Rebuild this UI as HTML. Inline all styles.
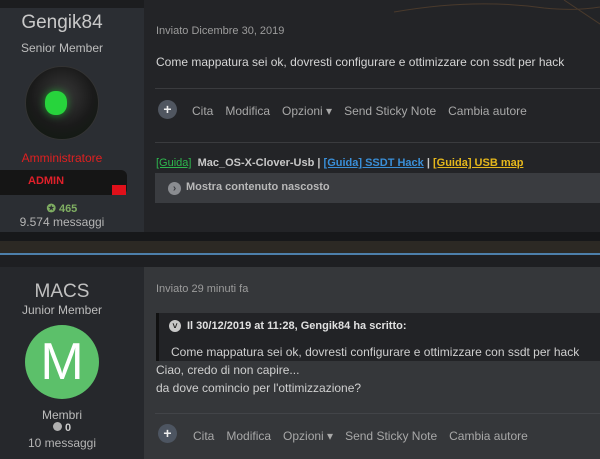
<!DOCTYPE html>
<html><head><meta charset="utf-8"><style>
*{margin:0;padding:0;box-sizing:border-box}
body{width:600px;height:459px;overflow:hidden;background:#1e1f22;font-family:"Liberation Sans",sans-serif;position:relative}
.a{position:absolute}
.t{position:absolute;white-space:nowrap}
.act span{margin-left:12px}
</style></head><body>
<!-- post 1 -->
<div class="a" style="left:0;top:0;width:600px;height:8px;background:#1c1d1f"></div>
<div class="a" style="left:0;top:8px;width:144px;height:232px;background:#2b2e33"></div>
<div class="a" style="left:144px;top:0;width:456px;height:232px;background:#232427"></div>
<svg class="a" style="left:144px;top:0" width="456" height="90"><path d="M420 0 Q450 20 480 40 M250 12 Q330 -2 400 8 Q440 12 470 4" stroke="#4a3a2c" stroke-width="1" fill="none"/></svg>
<div class="t" style="left:0;width:124px;text-align:center;top:12px;font-size:19px;color:#c9c9c9">Gengik84</div>
<div class="t" style="left:0;width:124px;text-align:center;top:41px;font-size:12px;color:#bdbdbd">Senior Member</div>
<div class="a" style="left:25px;top:66px;width:74px;height:74px;border-radius:50%;background:radial-gradient(circle at 50% 40%,#3a3a3a 0,#1a1a1a 55%,#0e1a0e 100%);border:1px solid #333"></div>
<div class="a" style="left:45px;top:91px;width:22px;height:24px;border-radius:45%;background:#27d43c;box-shadow:0 0 8px #1c8e2a"></div>
<div class="t" style="left:0;width:124px;text-align:center;top:151px;font-size:12px;color:#e02020">Amministratore</div>
<div class="a" style="left:0;top:170px;width:127px;height:25px;background:#151515;border-radius:0 6px 6px 0"></div>
<div class="t" style="left:28px;top:175px;font-size:11px;font-weight:bold;color:#e0202a">ADMIN</div>
<div class="a" style="left:112px;top:185px;width:14px;height:10px;background:#e0101a"></div>
<div class="t" style="left:0;width:124px;text-align:center;top:202px;font-size:11px;color:#7fae62;font-weight:bold">✪ 465</div>
<div class="t" style="left:0;width:124px;text-align:center;top:215px;font-size:12px;color:#b5b5b5">9.574 messaggi</div>

<div class="t" style="left:156px;top:25px;font-size:11px;color:#9c9c9c">Inviato Dicembre 30, 2019</div>
<div class="t" style="left:156px;top:55px;font-size:12px;color:#d5d5d5">Come mappatura sei ok, dovresti configurare e ottimizzare con ssdt per hack</div>
<div class="a" style="left:155px;top:88px;width:445px;height:1px;background:#3a3b3e"></div>
<div class="a" style="left:158px;top:100px;width:19px;height:19px;border-radius:50%;background:#505660;color:#eee;font-size:14px;font-weight:bold;text-align:center;line-height:19px">+</div>
<div class="t act" style="left:192px;top:104px;font-size:12px;color:#a8a8a8">Cita<span>Modifica</span><span>Opzioni ▾</span><span>Send Sticky Note</span><span>Cambia autore</span></div>
<div class="a" style="left:155px;top:142px;width:445px;height:1px;background:#3a3b3e"></div>
<div class="t" style="left:156px;top:157px;font-size:11px;font-weight:bold;color:#c8c8c8"><span style="color:#2eb84e;font-weight:normal;text-decoration:underline">[Guida]</span>&nbsp; Mac_OS-X-Clover-Usb | <span style="color:#3a8fd8;text-decoration:underline">[Guida] SSDT Hack</span> | <span style="color:#e6b81c;text-decoration:underline">[Guida] USB map</span></div>
<div class="a" style="left:155px;top:173px;width:445px;height:30px;background:#3a3c40"></div>
<div class="a" style="left:168px;top:182px;width:13px;height:13px;border-radius:50%;background:#8a8c90;color:#3a3c40;font-size:10px;font-weight:bold;text-align:center;line-height:13px">›</div>
<div class="t" style="left:186px;top:181px;font-size:11px;font-weight:bold;color:#b8b8b8">Mostra contenuto nascosto</div>
<!-- divider -->
<div class="a" style="left:0;top:232px;width:600px;height:9px;background:#17181a"></div>
<div class="a" style="left:0;top:241px;width:600px;height:12px;background:#2c2924"></div>
<div class="a" style="left:0;top:253px;width:600px;height:2px;background:#4d7fab"></div>
<div class="a" style="left:0;top:255px;width:600px;height:12px;background:#1e1f22"></div>
<!-- post 2 -->
<div class="a" style="left:0;top:267px;width:144px;height:192px;background:#26282c"></div>
<div class="a" style="left:144px;top:267px;width:456px;height:192px;background:#35373a"></div>
<div class="t" style="left:0;width:124px;text-align:center;top:281px;font-size:19px;color:#c0c0c0">MACS</div>
<div class="t" style="left:0;width:124px;text-align:center;top:303px;font-size:12px;color:#bdbdbd">Junior Member</div>
<div class="a" style="left:25px;top:325px;width:74px;height:74px;border-radius:50%;background:#5cc06a;color:#fff;font-size:52px;text-align:center;line-height:74px">M</div>
<div class="t" style="left:0;width:124px;text-align:center;top:408px;font-size:12px;color:#bdbdbd">Membri</div>
<div class="t" style="left:0;width:124px;text-align:center;top:422px;font-size:11px;font-weight:bold;color:#ccc"><span style="display:inline-block;width:9px;height:9px;border-radius:50%;background:#b0b0b0;margin-right:3px"></span>0</div>
<div class="t" style="left:0;width:124px;text-align:center;top:436px;font-size:12px;color:#b5b5b5">10 messaggi</div>

<div class="t" style="left:156px;top:283px;font-size:11px;color:#9c9c9c">Inviato 29 minuti fa</div>
<div class="a" style="left:156px;top:313px;width:444px;height:48px;background:#222326;border-left:3px solid #111"></div>
<div class="a" style="left:169px;top:320px;width:12px;height:12px;border-radius:50%;background:#c8c8c8;color:#222;font-size:9px;text-align:center;line-height:12px;font-weight:bold">˅</div>
<div class="t" style="left:187px;top:320px;font-size:11px;font-weight:bold;color:#e0e0e0">Il 30/12/2019 at 11:28, Gengik84 ha scritto:</div>
<div class="t" style="left:171px;top:345px;font-size:12px;color:#cfcfcf">Come mappatura sei ok, dovresti configurare e ottimizzare con ssdt per hack</div>
<div class="t" style="left:156px;top:363px;font-size:12px;color:#cfcfcf">Ciao, credo di non capire...</div>
<div class="t" style="left:156px;top:381px;font-size:12px;color:#cfcfcf">da dove comincio per l'ottimizzazione?</div>
<div class="a" style="left:155px;top:413px;width:445px;height:1px;background:#424448"></div>
<div class="a" style="left:158px;top:424px;width:19px;height:19px;border-radius:50%;background:#4d5561;color:#eee;font-size:14px;font-weight:bold;text-align:center;line-height:19px">+</div>
<div class="t act" style="left:193px;top:429px;font-size:12px;color:#a8a8a8">Cita<span>Modifica</span><span>Opzioni ▾</span><span>Send Sticky Note</span><span>Cambia autore</span></div>
</body></html>
